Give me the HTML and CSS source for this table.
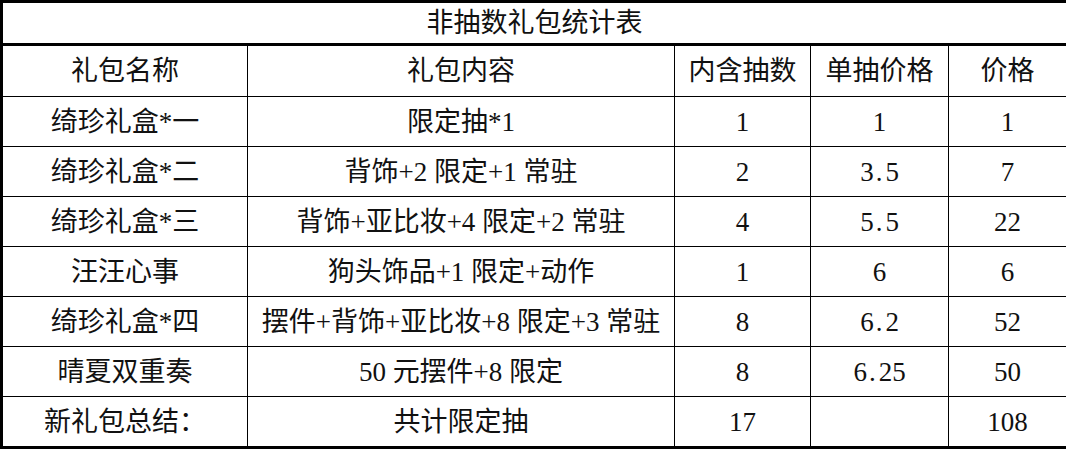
FILE: index.html
```html
<!DOCTYPE html>
<html lang="zh-CN">
<head>
<meta charset="utf-8">
<title>非抽数礼包统计表</title>
<link rel="stylesheet" href="styles.css">
</head>
<body>
<table class="sheet">
  <colgroup>
    <col class="c-name">
    <col class="c-content">
    <col class="c-count">
    <col class="c-unit">
    <col class="c-price">
  </colgroup>
  <thead>
    <tr class="title-row"><th colspan="5">非抽数礼包统计表</th></tr>
    <tr class="head-row">
      <th>礼包名称</th><th>礼包内容</th><th>内含抽数</th><th>单抽价格</th><th>价格</th>
    </tr>
  </thead>
  <tbody>
    <tr><td>绮珍礼盒*一</td><td>限定抽*1</td><td>1</td><td>1</td><td>1</td></tr>
    <tr><td>绮珍礼盒*二</td><td>背饰+2 限定+1 常驻</td><td>2</td><td>3<span class="dot">.</span>5</td><td>7</td></tr>
    <tr><td>绮珍礼盒*三</td><td>背饰+亚比妆+4 限定+2 常驻</td><td>4</td><td>5<span class="dot">.</span>5</td><td>22</td></tr>
    <tr><td>汪汪心事</td><td>狗头饰品+1 限定+动作</td><td>1</td><td>6</td><td>6</td></tr>
    <tr><td>绮珍礼盒*四</td><td>摆件+背饰+亚比妆+8 限定+3 常驻</td><td>8</td><td>6<span class="dot">.</span>2</td><td>52</td></tr>
    <tr><td>晴夏双重奏</td><td>50 元摆件+8 限定</td><td>8</td><td>6<span class="dot">.</span>25</td><td>50</td></tr>
    <tr class="last-row"><td>新礼包总结：</td><td>共计限定抽</td><td>17</td><td></td><td>108</td></tr>
  </tbody>
</table>
</body>
</html>
```

FILE: styles.css
```css
html, body {
  margin: 0;
  padding: 0;
  background: #ffffff;
}

.sheet {
  width: 1066px;
  border-collapse: collapse;
  table-layout: fixed;
  font-family: "Liberation Serif", "Noto Sans CJK SC", serif;
  font-size: 27px;
  color: #111111;
  border: 3px solid #000000;
}

.c-name { width: 246px; }
.c-content { width: 427px; }
.c-count { width: 136px; }
.c-unit { width: 138px; }
.c-price { width: 119px; }

.sheet th,
.sheet td {
  border: 1px solid #000000;
  padding: 0;
  text-align: center;
  vertical-align: middle;
  font-weight: normal;
  height: 49px;
  line-height: 30px;
}

.sheet .title-row th {
  height: 40px;
  border-bottom: 3px solid #000000;
}

.sheet .head-row th {
  height: 50px;
}

.sheet .last-row td {
  height: 49px;
}

.dot {
  padding: 0 3px 0 2px;
}
```
